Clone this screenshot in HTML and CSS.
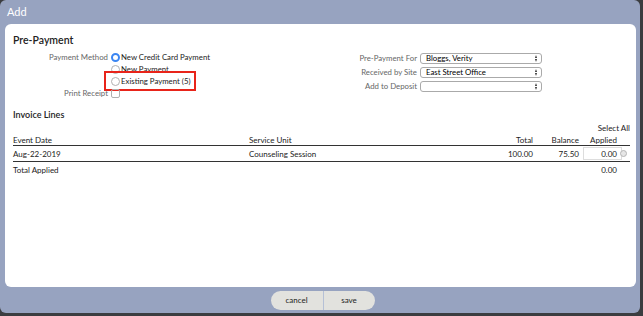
FILE: index.html
```html
<!DOCTYPE html>
<html lang="en">
<head>
    <meta charset="UTF-8" />
    <title>Add</title>
    <link rel="stylesheet" href="styles.css">
</head>
<body>
    <div class="dialog">
        <div class="dialog-title">Add</div>
        <div class="dialog-body">
            <h2 class="section-header">Pre-Payment</h2>
            <div class="form-cols">
                <div class="form-left">
                    <div class="field">
                        <label class="field-label">Payment Method</label>
                        <div class="radio-list">
                            <label class="radio-item"><span class="radio checked"></span>New Credit Card Payment</label>
                            <label class="radio-item"><span class="radio"></span>New Payment</label>
                            <label class="radio-item highlight"><span class="radio"></span>Existing Payment (5)</label>
                        </div>
                    </div>
                    <div class="field">
                        <label class="field-label">Print Receipt</label>
                        <span class="checkbox"></span>
                    </div>
                </div>
                <div class="form-right">
                    <div class="field">
                        <label class="field-label">Pre-Payment For</label>
                        <div class="select">Bloggs, Verity<span class="arrows"></span></div>
                    </div>
                    <div class="field">
                        <label class="field-label">Received by Site</label>
                        <div class="select">East Street Office<span class="arrows"></span></div>
                    </div>
                    <div class="field">
                        <label class="field-label">Add to Deposit</label>
                        <div class="select"><span class="arrows"></span></div>
                    </div>
                </div>
            </div>

            <h3 class="sub-header">Invoice Lines</h3>
            <table class="lines">
                <colgroup>
                    <col class="col-date">
                    <col class="col-unit">
                    <col class="col-total">
                    <col class="col-balance">
                    <col class="col-applied">
                </colgroup>
                <thead>
                    <tr class="select-all-row">
                        <th></th><th></th><th></th><th></th>
                        <th class="num">Select All</th>
                    </tr>
                    <tr class="head-row">
                        <th>Event Date</th>
                        <th>Service Unit</th>
                        <th class="num">Total</th>
                        <th class="num">Balance</th>
                        <th class="num applied-head">Applied</th>
                    </tr>
                </thead>
                <tbody>
                    <tr class="line-row">
                        <td>Aug-22-2019</td>
                        <td>Counseling Session</td>
                        <td class="num">100.00</td>
                        <td class="num">75.50</td>
                        <td><span class="applied-input">0.00<span class="clear-btn"></span></span></td>
                    </tr>
                    <tr class="total-row">
                        <td>Total Applied</td>
                        <td></td><td></td><td></td>
                        <td class="num applied-total">0.00</td>
                    </tr>
                </tbody>
            </table>
        </div>
        <div class="dialog-footer">
            <div class="btn-group">
                <button class="btn">cancel</button>
                <button class="btn">save</button>
            </div>
        </div>
    </div>
</body>
</html>
```

FILE: styles.css
```css
body {
    margin: 0;
    background: #3b3d40;
    font-family: Lato, 'Open Sans', sans-serif;
    color: #222;
}

.dialog {
    width: 640px;
    height: 313px;
    background: #97a3c0;
    border-radius: 6px;
    display: flex;
    flex-direction: column;
}

.dialog-title {
    height: 24px;
    line-height: 24px;
    padding-left: 7px;
    color: #fff;
    font-size: 11px;
}

.dialog-body {
    height: 263px;
    margin: 0 4px 0 5px;
    background: #fff;
    border-radius: 6px;
    padding: 9px 8px 0 8px;
    box-sizing: border-box;
}

.section-header {
    margin: 0 0 4px 0;
    font-size: 10.5px;
    line-height: 14px;
    font-weight: 600;
    color: #222;
}

.form-cols {
    display: flex;
    font-size: 7.8px;
}

.form-left {
    width: 300px;
}

.form-right {
    padding-left: 8px;
    padding-top: 2px;
}

.field {
    display: flex;
    align-items: flex-start;
}

.field-label {
    width: 95px;
    text-align: right;
    color: #666;
    padding-right: 3px;
    line-height: 12px;
}

.form-right .field-label {
    width: 96px;
    line-height: 11px;
}

.radio-list {
    display: flex;
    flex-direction: column;
}

.radio-item {
    display: flex;
    align-items: center;
    height: 12px;
    color: #222;
}

.radio {
    width: 9px;
    height: 9px;
    border: 1px solid #b0b0b0;
    border-radius: 50%;
    margin-right: 1px;
    background: #fff;
    box-sizing: border-box;
}

.radio.checked {
    border: 2.5px solid #3b86f2;
}

.highlight {
    outline: 2px solid #e8241a;
    outline-offset: 2px;
    margin-left: -3px;
    padding-left: 3px;
    padding-right: 1px;
    align-self: flex-start;
}

.checkbox {
    width: 9px;
    height: 9px;
    border: 1px solid #b0b0b0;
    border-radius: 2px;
    margin-top: 2px;
    box-sizing: border-box;
}

.form-right .field {
    margin-bottom: 3px;
}

.select {
    position: relative;
    width: 122px;
    height: 11px;
    border: 1px solid #aaa;
    border-radius: 3px;
    box-sizing: border-box;
    padding-left: 5px;
    line-height: 9px;
    color: #000;
    background: #fff;
}

.arrows {
    position: absolute;
    right: 3px;
    top: 1px;
    width: 3px;
    height: 7px;
}

.arrows::before,
.arrows::after {
    content: "";
    position: absolute;
    left: 0;
    border-left: 1.5px solid transparent;
    border-right: 1.5px solid transparent;
}

.arrows::before {
    top: 0;
    border-bottom: 3px solid #333;
}

.arrows::after {
    bottom: 0;
    border-top: 3px solid #333;
}

.sub-header {
    margin: 10px 0 1px 0;
    font-size: 9px;
    line-height: 12px;
    font-weight: 600;
    color: #222;
}

.lines {
    width: 617px;
    table-layout: fixed;
    border-collapse: collapse;
    font-size: 8px;
}

.col-date { width: 236px; }
.col-unit { width: 220px; }
.col-total { width: 64px; }
.col-balance { width: 46px; }
.col-applied { width: 51px; }

.lines th,
.lines td {
    font-weight: normal;
    text-align: left;
    padding: 0;
    white-space: nowrap;
}

.lines .num {
    text-align: right;
}

.select-all-row th {
    height: 12px;
}

.head-row th {
    height: 11px;
    border-bottom: 1px solid #333;
}

.applied-head {
    padding-right: 13px !important;
}

.line-row td {
    height: 15px;
    border-bottom: 1px solid #333;
}

.applied-input {
    display: inline-block;
    position: relative;
    width: 39px;
    height: 13px;
    line-height: 12px;
    border: 1px solid #ddd;
    box-sizing: border-box;
    text-align: right;
    padding-right: 4px;
    margin-left: 4px;
    vertical-align: middle;
}

.clear-btn {
    position: absolute;
    right: -6px;
    top: 2px;
    width: 7px;
    height: 7px;
    border-radius: 50%;
    border: 1.5px solid #b5b5b5;
    background: #e6e6e6;
    box-sizing: border-box;
}

.total-row td {
    height: 16px;
}

.applied-total {
    padding-right: 13px !important;
}

.dialog-footer {
    flex: 1;
    display: flex;
    justify-content: center;
    align-items: center;
    padding-left: 5px;
}

.btn-group {
    display: flex;
    border-radius: 10px;
    overflow: hidden;
}

.btn {
    width: 52px;
    height: 19px;
    border: none;
    background: #e2e2de;
    font-family: Lato, sans-serif;
    font-size: 8px;
    color: #222;
    padding: 0;
}

.btn + .btn {
    border-left: 1px solid #b5c0d6;
}
```
